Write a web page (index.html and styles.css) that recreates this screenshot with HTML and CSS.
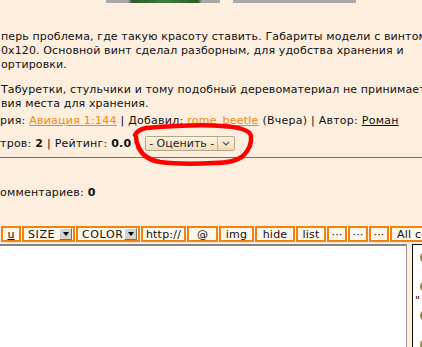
FILE: index.html
```html
<!DOCTYPE html>
<html>
<head>
  <title>Модель</title>
  <link rel="stylesheet" href="styles.css">
</head>
<body>
  <div class="page">
    <div class="thumbs">
      <span class="thumb thumb-green"></span>
      <span class="thumb"></span>
    </div>

    <div class="entry">
      <p class="text">перь проблема, где такую красоту ставить. Габариты модели с винтом<br>0x120. Основной винт сделал разборным, для удобства хранения и<br>ортировки.</p>
      <p class="text text-last">Табуретки, стульчики и тому подобный деревоматериал не принимается<br>вия места для хранения.</p>
      <div class="meta">рия: <a class="link" href="#">Авиация 1:144</a> | Добавил: <a class="link" href="#">rome_beetle</a> (Вчера) | Автор: <a class="author" href="#">Роман</a></div>
      <div class="meta rating-row">
        <span>тров: <b>2</b> | Рейтинг: <b>0.0</b> |</span>
        <span class="rate">
          <span class="rate-label">- Оценить -</span>
          <span class="rate-arrow">
            <svg width="8" height="5" viewBox="0 0 8 5"><path d="M1 1 L4 4 L7 1" fill="none" stroke="#555" stroke-width="1.2"/></svg>
          </span>
        </span>
      </div>
    </div>

    <div class="comments-count">омментариев: <b>0</b></div>

    <div class="toolbar">
      <span class="btn btn-u"><u>u</u></span>
      <span class="btn select select-size">SIZE<span class="drop"></span></span>
      <span class="btn select select-color">COLOR<span class="drop"></span></span>
      <span class="btn btn-http">http://</span>
      <span class="btn btn-at">@</span>
      <span class="btn btn-img">img</span>
      <span class="btn btn-hide">hide</span>
      <span class="btn btn-list">list</span>
      <span class="btn btn-dots">···</span>
      <span class="btn btn-dots">···</span>
      <span class="btn btn-dots">···</span>
      <span class="btn btn-all">All codes</span>
    </div>

    <div class="editor">
      <div class="textarea"></div>
      <div class="smiles">
        <span class="smile"></span>
        <span class="smile"></span>
        <span class="quote">"</span>
        <span class="smile"></span>
        <span class="smile"></span>
      </div>
    </div>

    <svg class="scribble" width="422" height="347" viewBox="0 0 422 347">
      <path d="M135 135 C137 131 141 129 146 128 C170 126 198 124 222 126 C238 127 250 130 251 136 C252 145 248 151 243 156 C237 161 228 163 214 163 C195 164 175 164 160 162 C149 160 142 155 139 148 C137 144 136 140 136 137" fill="none" stroke="#ff0000" stroke-width="4.5" stroke-linecap="round" stroke-linejoin="round"/>
    </svg>
  </div>
</body>
</html>
```

FILE: styles.css
```css
body {
  margin: 0;
  background-color: #fdeedd;
  font-family: "DejaVu Sans", Verdana, sans-serif;
  font-size: 11px;
  color: #111;
}

.page {
  position: relative;
  width: 422px;
  height: 347px;
  overflow: hidden;
}

.thumbs {
  display: flex;
  gap: 13px;
  height: 3px;
  padding-left: 106px;
}

.thumb {
  display: block;
  width: 123px;
  height: 3px;
  background-color: #a9a9a9;
}

.thumb-green {
  width: 114px;
  background: linear-gradient(to right, #a9a9a9 0 22px, #2e5b2c 26px, #3f7d3a 60px, #2e5b2c 92px, #a9a9a9 96px);
}

.entry {
  padding-top: 27px;
  padding-bottom: 6px;
  border-bottom: 1px solid #a46a00;
  letter-spacing: 0.25px;
}

.text {
  margin: 0 0 11px;
  padding-left: 1px;
  line-height: 14px;
  letter-spacing: 0.12px;
  white-space: nowrap;
}

.text-last {
  margin-bottom: 3px;
}

.meta {
  line-height: 14px;
  white-space: nowrap;
}

.link {
  color: #f08a14;
}

.author {
  color: #111;
}

.rating-row {
  display: flex;
  align-items: center;
  gap: 6px;
  margin-top: 8px;
}

.rate {
  display: inline-flex;
  height: 13px;
  border: 1px solid #b5a68a;
  border-radius: 2px;
  background: linear-gradient(#fdf4e4, #f2dcb6);
  line-height: 13px;
  letter-spacing: 0;
  color: #222;
}

.rate-label {
  padding: 0 3px;
}

.rate-arrow {
  display: flex;
  align-items: center;
  justify-content: center;
  width: 16px;
  border-left: 1px solid #c9b897;
}

.comments-count {
  margin-top: 28px;
  line-height: 14px;
  letter-spacing: 0.2px;
  white-space: nowrap;
}

.toolbar {
  display: flex;
  gap: 1px;
  margin-top: 26px;
  padding-left: 1px;
  white-space: nowrap;
}

.btn {
  display: flex;
  align-items: center;
  justify-content: center;
  flex: none;
  box-sizing: border-box;
  height: 16px;
  border: 2px solid #f08410;
  background-color: #fff7ec;
  color: #111;
  letter-spacing: 0.2px;
}

.btn-u { width: 20px; }
.btn-http { width: 45px; }
.btn-at { width: 31px; }
.btn-img { width: 35px; }
.btn-hide { width: 40px; }
.btn-list { width: 30px; }
.btn-dots { width: 20px; }
.btn-all { width: 60px; justify-content: flex-start; padding-left: 5px; }

.select {
  justify-content: space-between;
  padding: 0 1px 0 4px;
  letter-spacing: 0.6px;
}

.select-size { width: 53px; }
.select-color { width: 64px; }

.drop {
  position: relative;
  width: 13px;
  height: 12px;
  box-sizing: border-box;
  border: 1px solid;
  border-color: #fff #707070 #707070 #fff;
  background-color: #d6d3ce;
}

.drop::after {
  content: "";
  position: absolute;
  left: 3px;
  top: 3px;
  border-left: 3px solid transparent;
  border-right: 3px solid transparent;
  border-top: 4px solid #000;
}

.editor {
  display: flex;
  gap: 5px;
  margin-top: 2px;
}

.textarea {
  flex: none;
  width: 407px;
  height: 110px;
  box-sizing: border-box;
  border-top: 2px solid #8a8580;
  border-right: 1px solid #9a9590;
  background-color: #fff;
}

.smiles {
  display: flex;
  flex-direction: column;
  gap: 18px;
  flex: none;
  width: 40px;
  height: 110px;
  box-sizing: border-box;
  border: 1px solid #111;
  border-right: none;
  padding: 7px 0 0 7px;
  background-color: #fff;
}

.smile {
  display: block;
  width: 11px;
  height: 11px;
  border-radius: 50%;
  background-color: #9a8540;
}

.quote {
  margin: -14px 0 -14px -5px;
  line-height: 10px;
}

.scribble {
  position: absolute;
  left: 0;
  top: 0;
  pointer-events: none;
}
```
